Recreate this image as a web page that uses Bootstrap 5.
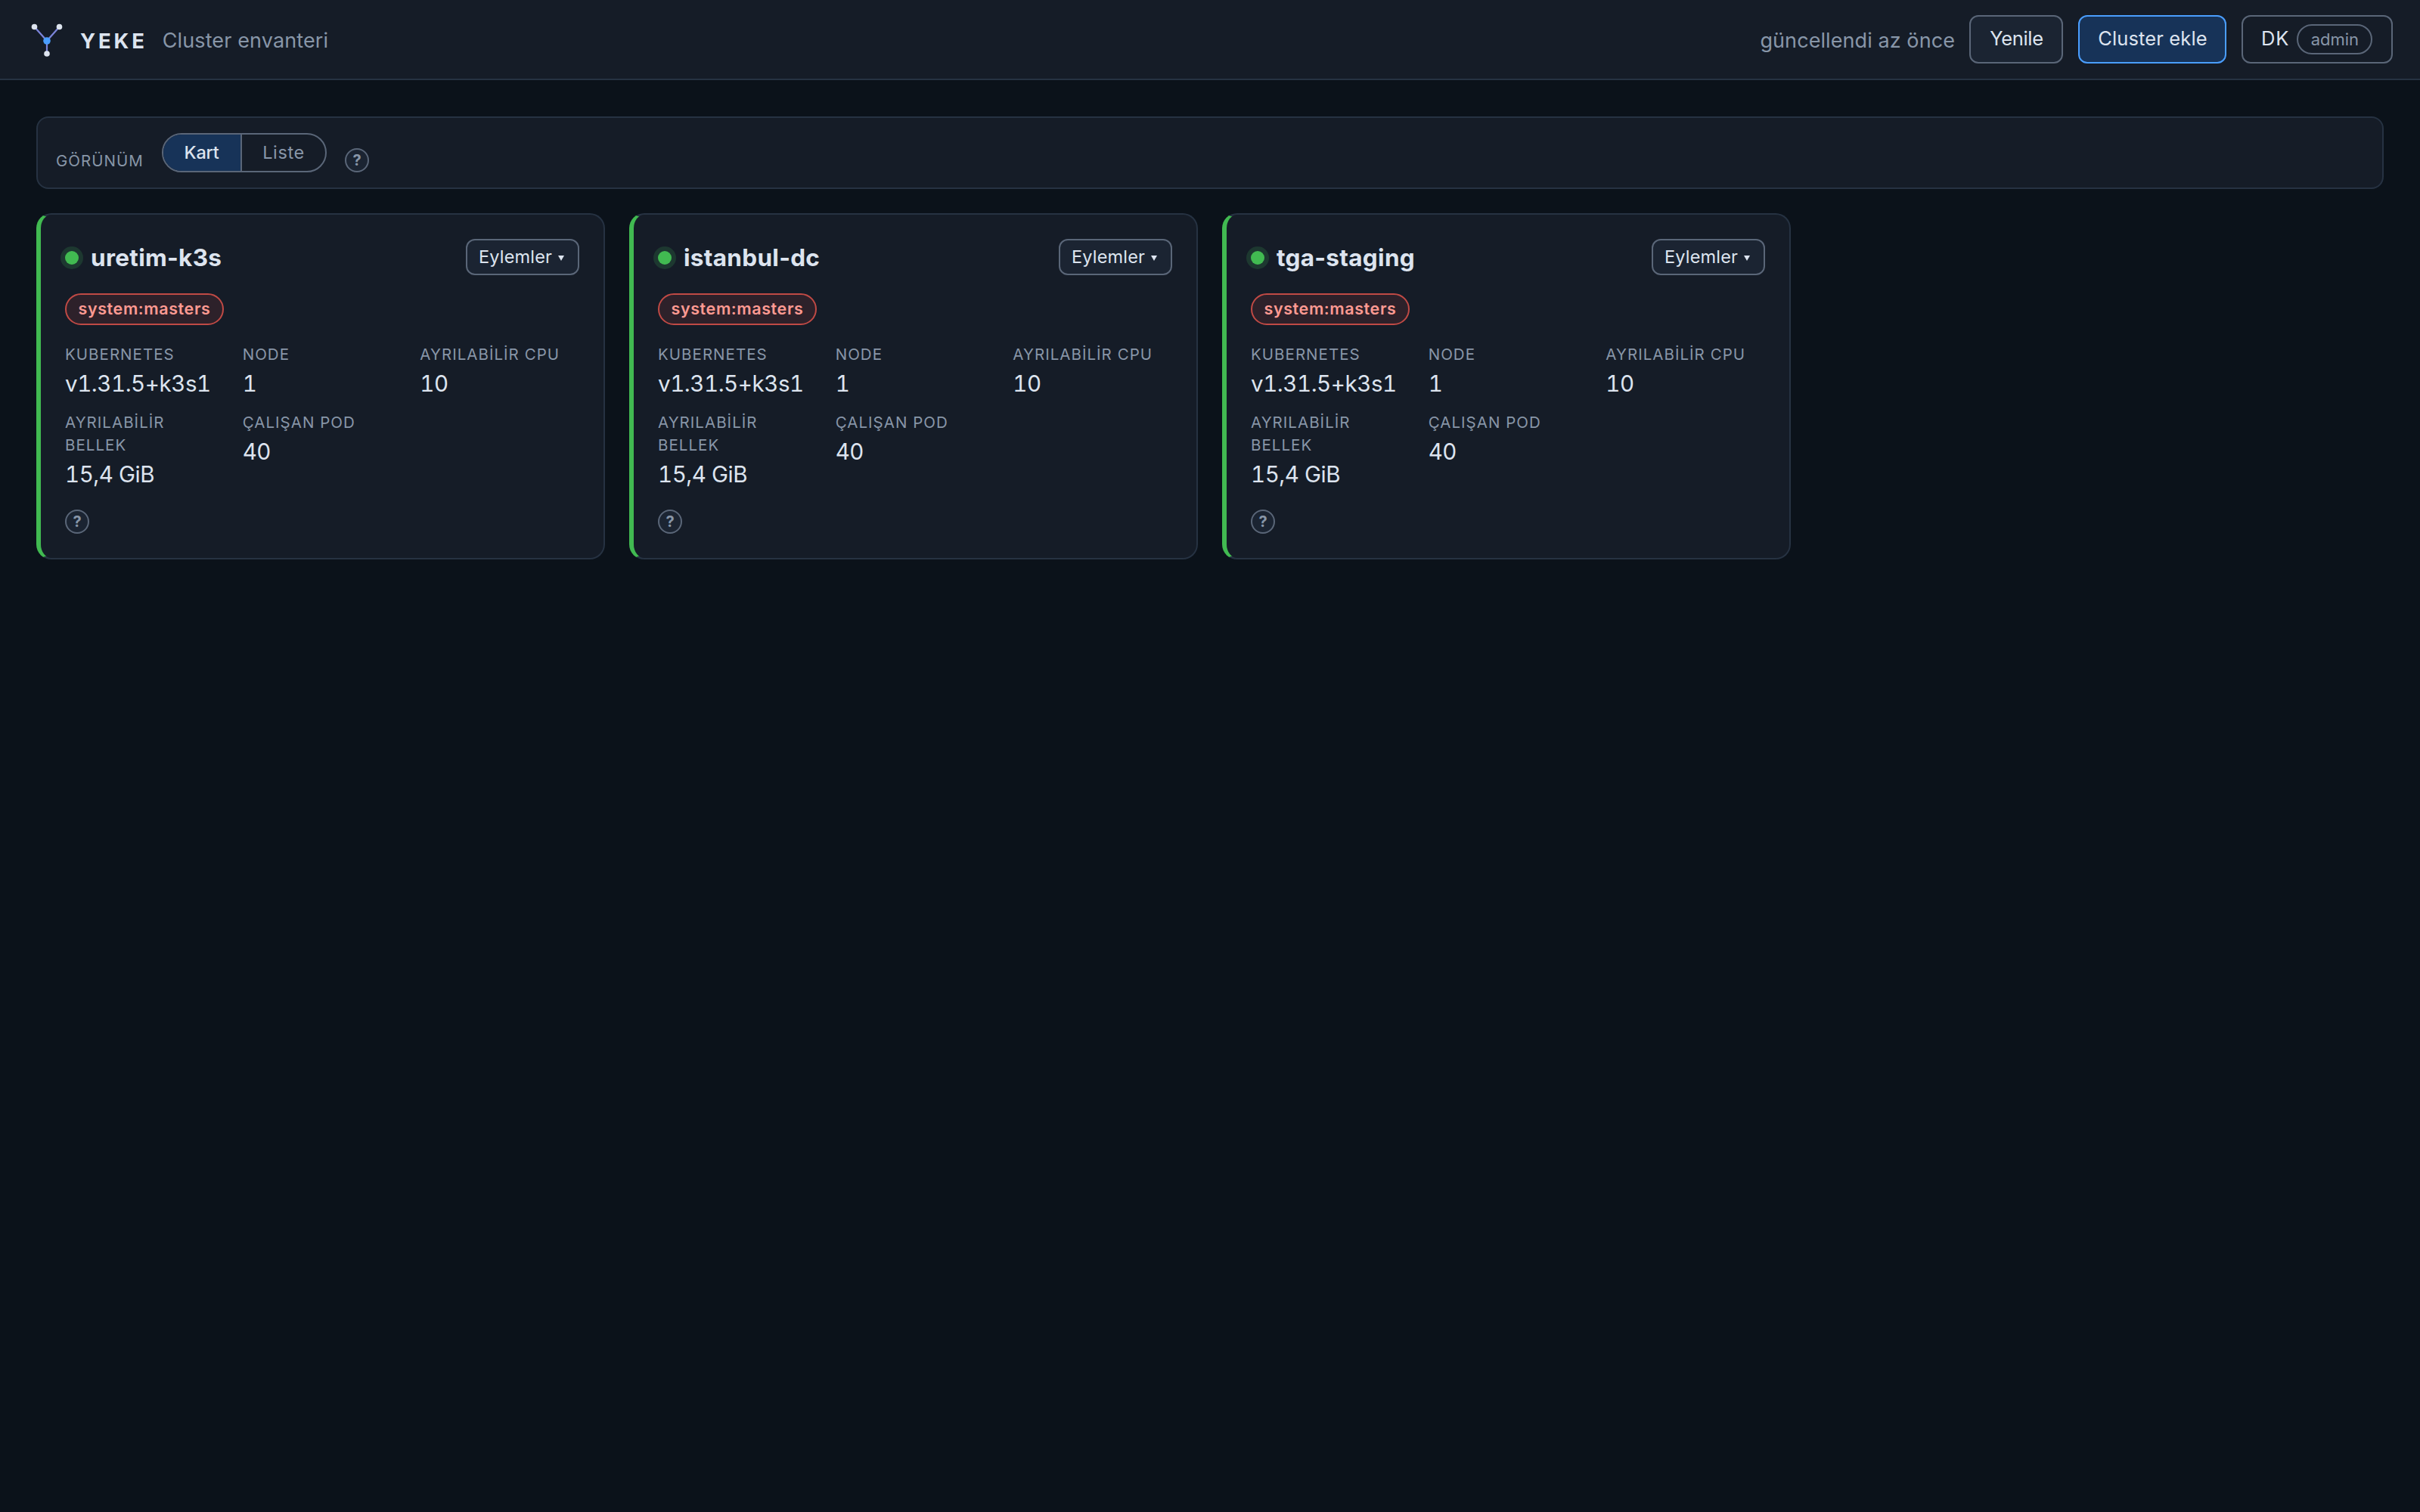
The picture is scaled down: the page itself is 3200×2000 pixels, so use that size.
<!DOCTYPE html>
<html lang="tr" data-bs-theme="dark">
<head>
<meta charset="utf-8">
<meta name="viewport" content="width=device-width, initial-scale=1">
<title>YEKE</title>
<link href="https://cdn.jsdelivr.net/npm/bootstrap@5.3.0/dist/css/bootstrap.min.css" rel="stylesheet">
<style>
:root{--y-bg:#0b121a;--y-panel:#151c27;--y-raised:#1b2432;--y-line:#263242;--y-edge:#5a6678;--y-text:#dde4ef;--y-muted:#8896a8;--y-blue:#4a9eff;--y-navy:#173358;--y-green:#41ba51}
body{background:var(--y-bg);color:var(--y-text);font-family:Inter,"Noto Sans",sans-serif;font-size:27px;line-height:1.2}
.topbar{height:106px;padding:0 36px;background:var(--y-panel);border-bottom:2px solid var(--y-line)}
.logo{margin-right:18px}
.brand-name{font-weight:700;font-size:27.5px;letter-spacing:3.85px;padding-top:4px;margin-right:20px}
.muted-text{color:var(--y-muted);padding-top:5px;letter-spacing:.12px}
.updated{margin-right:-1px;letter-spacing:.08px}
.tbtn{height:64px;padding:0 0 2px;border:2px solid var(--y-edge);border-radius:12px;background:var(--y-raised);color:var(--y-text);font-size:25.5px;line-height:1;letter-spacing:.12px}
.tbtn-refresh{width:124px;padding-left:1px;letter-spacing:-.35px}
.tbtn-add{width:196px;padding-left:1px;background:var(--y-navy);border-color:var(--y-blue)}
.tbtn-user{width:200px;background:transparent;padding-left:24px}
.initials{letter-spacing:.9px;margin-right:10px}
.role-pill{width:100px;height:40px;border:2px solid var(--y-edge);border-radius:20px;color:var(--y-muted);font-size:22px;letter-spacing:0;margin-top:2px}
.page{padding:48px}
.viewbar{height:96px;padding:20px 24px;gap:24px;background:var(--y-panel);border:2px solid var(--y-line);border-radius:16px;margin-bottom:32px}
.cap{color:var(--y-muted);font-size:20.5px;line-height:30px;letter-spacing:1.03px;font-weight:400}
.view-cap{width:116px}
.segmented{height:52px;border:2px solid var(--y-edge);border-radius:26px;overflow:hidden;font-size:23.5px;line-height:47px;text-align:center}
.seg-on{width:102px;padding-right:1px;background:var(--y-navy);font-weight:500;letter-spacing:-.3px}
.seg-off{width:112px;border-left:2px solid var(--y-edge);color:var(--y-muted);letter-spacing:.6px}
.help{width:32px;height:32px;border:2px solid var(--y-edge);border-radius:50%;background:var(--y-raised);color:var(--y-muted);font-weight:700;font-size:20px;line-height:1}
.clusters{display:grid;grid-template-columns:repeat(4,752px);gap:32px}
.cluster{padding:32px;background:var(--y-panel);border:2px solid var(--y-line);border-left:6px solid var(--y-green);border-radius:20px}
.cluster-head{height:48px}
.status-dot{width:18px;height:18px;border-radius:50%;background:var(--y-green);box-shadow:0 0 0 6px #1d3830;margin:2px 16px 0 0}
.cluster-name{color:var(--y-text);font-size:31.5px;font-weight:700;line-height:1.2;margin:1px 0 0;letter-spacing:.3px}
.actions{width:150px;height:48px;padding:0 0 0 15px;border:2px solid var(--y-edge);border-radius:12px;background:var(--y-raised);color:var(--y-text);font-size:23.5px;line-height:1;letter-spacing:.17px}
.actions svg{margin:3px 0 0 8px}
.warn-pill{width:210px;height:42px;line-height:37px;margin:24px 0;border:2px solid #c04a45;border-radius:21px;background:#2d212a;color:#ff9a92;font-size:21.5px;font-weight:600;letter-spacing:.6px;text-align:center}
.facts{display:grid;grid-template-columns:repeat(3,1fr);gap:16px 24px;margin:0 0 26px}
.facts dd{margin:2px 0 0;font-size:29.5px;line-height:42px;letter-spacing:-.45px;font-variant-numeric:tabular-nums}
</style>
</head>
<body>
<header class="topbar d-flex align-items-center">
  <svg class="logo flex-shrink-0" width="52" height="48" viewBox="0 0 52 48" aria-hidden="true">
    <path d="M9.5 7.5 26 26 42.5 7.5M26 26v17" fill="none" stroke="#7b84d9" stroke-width="2.2"/>
    <g fill="#dde4ef"><circle cx="9.5" cy="7.5" r="3.8"/><circle cx="42.5" cy="7.5" r="3.8"/><circle cx="26" cy="43" r="3.8"/></g>
    <circle cx="26" cy="26" r="4.8" fill="#4a9eff"/>
  </svg>
  <span class="brand-name">YEKE</span>
  <span class="muted-text">Cluster envanteri</span>
  <div class="d-flex align-items-center ms-auto" style="gap:20px">
    <span class="muted-text updated">güncellendi az önce</span>
    <button class="btn tbtn tbtn-refresh" type="button">Yenile</button>
    <button class="btn tbtn tbtn-add" type="button">Cluster ekle</button>
    <button class="btn tbtn tbtn-user d-flex align-items-center" type="button"><span class="initials">DK</span><span class="role-pill d-flex align-items-center justify-content-center">admin</span></button>
  </div>
</header>
<main class="page">
  <section class="viewbar d-flex align-items-end">
    <span class="cap view-cap">GÖRÜNÜM</span>
    <div class="segmented d-flex" role="group"><span class="seg-on">Kart</span><span class="seg-off">Liste</span></div>
    <span class="help d-flex align-items-center justify-content-center">?</span>
  </section>
  <section class="clusters" id="clusters"></section>
</main>
<script>
const card = name => `<article class="cluster">
  <div class="cluster-head d-flex align-items-center">
    <span class="status-dot flex-shrink-0"></span><h2 class="cluster-name">${name}</h2>
    <button class="btn actions d-flex align-items-center ms-auto" type="button">Eylemler<svg width="8" height="7" viewBox="0 0 8 7"><path d="M0 0h8L4 7z" fill="#dde4ef"/></svg></button>
  </div>
  <div class="warn-pill">system:masters</div>
  <dl class="facts">
    <div><dt class="cap">KUBERNETES</dt><dd>v1.31.5+k3s1</dd></div>
    <div><dt class="cap">NODE</dt><dd>1</dd></div>
    <div><dt class="cap">AYRILABİLİR CPU</dt><dd>10</dd></div>
    <div><dt class="cap">AYRILABİLİR BELLEK</dt><dd>15,4 GiB</dd></div>
    <div><dt class="cap">ÇALIŞAN POD</dt><dd>40</dd></div>
  </dl>
  <span class="help d-flex align-items-center justify-content-center">?</span>
</article>`;
document.getElementById('clusters').innerHTML = ['uretim-k3s', 'istanbul-dc', 'tga-staging'].map(card).join('');
</script>
<script src="https://cdn.jsdelivr.net/npm/bootstrap@5.3.0/dist/js/bootstrap.bundle.min.js"></script>
</body>
</html>
